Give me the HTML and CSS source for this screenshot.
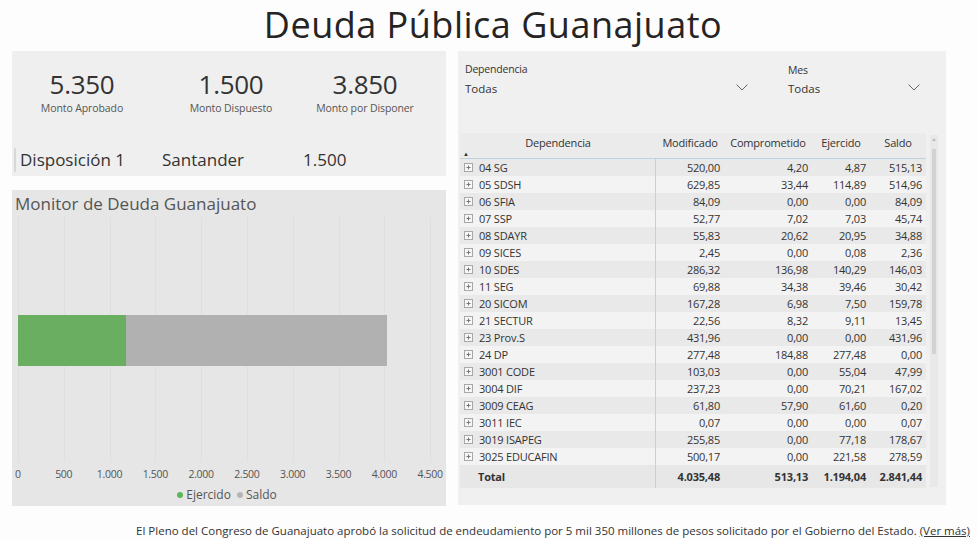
FILE: index.html
```html
<!DOCTYPE html>
<html lang="es">
<head>
<meta charset="utf-8">
<title>Deuda Pública Guanajuato</title>
<link rel="stylesheet" href="styles.css">
</head>
<body>
<div class="page">
  <h1 class="title">Deuda Pública Guanajuato</h1>
  <div class="main">
    <div class="left">
      <section class="kpis">
        <div class="kpi-row">
          <div class="kpi"><div class="kpi-num">5.350</div><div class="kpi-lbl">Monto Aprobado</div></div>
          <div class="kpi"><div class="kpi-num">1.500</div><div class="kpi-lbl">Monto Dispuesto</div></div>
          <div class="kpi"><div class="kpi-num">3.850</div><div class="kpi-lbl">Monto por Disponer</div></div>
        </div>
        <div class="disp-row">
          <span>Disposición 1</span><span>Santander</span><span>1.500</span>
        </div>
      </section>
      <section class="chart">
        <h2 class="chart-title">Monitor de Deuda Guanajuato</h2>
        <div class="plot">
          <div class="bar">
            <div class="seg seg-green" style="width:108px"></div>
            <div class="seg seg-gray" style="width:261px"></div>
          </div>
        </div>
        <div class="axis">
          <span>0</span><span>500</span><span>1.000</span><span>1.500</span><span>2.000</span><span>2.500</span><span>3.000</span><span>3.500</span><span>4.000</span><span>4.500</span>
        </div>
        <div class="legend">
          <span class="lg"><i class="dot dot-green"></i>Ejercido</span>
          <span class="lg"><i class="dot dot-gray"></i>Saldo</span>
        </div>
      </section>
    </div>
    <section class="rpanel">
      <div class="slicers">
        <div class="slicer slicer-dep">
          <div class="sl-lbl">Dependencia</div>
          <div class="sl-val"><span>Todas</span><svg class="chev" width="12" height="7" viewBox="0 0 12 7"><path d="M0.5 0.5 L6 6 L11.5 0.5" fill="none" stroke="#666" stroke-width="1"/></svg></div>
        </div>
        <div class="slicer slicer-mes">
          <div class="sl-lbl">Mes</div>
          <div class="sl-val"><span>Todas</span><svg class="chev" width="12" height="7" viewBox="0 0 12 7"><path d="M0.5 0.5 L6 6 L11.5 0.5" fill="none" stroke="#666" stroke-width="1"/></svg></div>
        </div>
      </div>
      <div class="tablewrap">
        <table class="grid">
          <colgroup><col class="c1"><col class="c2"><col class="c3"><col class="c4"><col class="c5"></colgroup>
          <thead>
            <tr><th class="th-dep">Dependencia<span class="sort">▲</span></th><th>Modificado</th><th>Comprometido</th><th>Ejercido</th><th>Saldo</th></tr>
          </thead>
          <tbody id="rows"></tbody>
          <tfoot>
            <tr><td class="name tot">Total</td><td>4.035,48</td><td>513,13</td><td>1.194,04</td><td>2.841,44</td></tr>
          </tfoot>
        </table>
        <div class="scroll"><div class="sc-up"></div><div class="sc-thumb"></div></div>
      </div>
    </section>
  </div>
  <p class="footer">El Pleno del Congreso de Guanajuato aprobó la solicitud de endeudamiento por 5 mil 350 millones de pesos solicitado por el Gobierno del Estado. <a class="more">(Ver más)</a></p>
</div>
<script src="app.js"></script>
</body>
</html>
```

FILE: app.js
```js
var data = [
["04 SG","520,00","4,20","4,87","515,13"],
["05 SDSH","629,85","33,44","114,89","514,96"],
["06 SFIA","84,09","0,00","0,00","84,09"],
["07 SSP","52,77","7,02","7,03","45,74"],
["08 SDAYR","55,83","20,62","20,95","34,88"],
["09 SICES","2,45","0,00","0,08","2,36"],
["10 SDES","286,32","136,98","140,29","146,03"],
["11 SEG","69,88","34,38","39,46","30,42"],
["20 SICOM","167,28","6,98","7,50","159,78"],
["21 SECTUR","22,56","8,32","9,11","13,45"],
["23 Prov.S","431,96","0,00","0,00","431,96"],
["24 DP","277,48","184,88","277,48","0,00"],
["3001 CODE","103,03","0,00","55,04","47,99"],
["3004 DIF","237,23","0,00","70,21","167,02"],
["3009 CEAG","61,80","57,90","61,60","0,20"],
["3011 IEC","0,07","0,00","0,00","0,07"],
["3019 ISAPEG","255,85","0,00","77,18","178,67"],
["3025 EDUCAFIN","500,17","0,00","221,58","278,59"]
];
var icon = '<svg class="exp" width="9" height="9" viewBox="0 0 9 9"><rect x="0.5" y="0.5" width="8" height="8" fill="#f7f7f7" stroke="#a8a8a8"/><path d="M2.5 4.5 H6.5 M4.5 2.5 V6.5" stroke="#777" stroke-width="1"/></svg>';
var html = '';
data.forEach(function (r) {
  html += '<tr><td class="name">' + icon + '<span>' + r[0] + '</span></td><td>' + r[1] + '</td><td>' + r[2] + '</td><td>' + r[3] + '</td><td>' + r[4] + '</td></tr>';
});
document.getElementById('rows').innerHTML = html;
```

FILE: styles.css
```css
* { box-sizing: border-box; }
html, body { margin: 0; padding: 0; background: #fdfdfd; }
body { font-family: "Open Sans", "Noto Sans", sans-serif; color: #333; width: 977px; height: 539px; overflow: hidden; }

.page { display: flex; flex-direction: column; }

.title {
  margin: 0; height: 51px; line-height: 49px;
  font-size: 36px; font-weight: 400; color: #252423;
  text-align: center; padding-left: 9px; letter-spacing: 0.5px;
}

.main { display: flex; gap: 12px; padding-left: 12px; }

.left { width: 434px; display: flex; flex-direction: column; gap: 14px; }

.kpis { background: #efefef; height: 125px; padding-top: 18px; }
.kpi-row { display: grid; grid-template-columns: 140px 158px 110px; }
.kpi { text-align: center; }
.kpi-num { font-size: 26px; line-height: 30px; color: #333; letter-spacing: -0.3px; }
.kpi-lbl { font-size: 10.5px; line-height: 14px; color: #555; margin-top: 2px; letter-spacing: -0.1px; white-space: nowrap; }

.disp-row {
  margin-top: 33px; margin-left: 2px; height: 24px;
  border-left: 2px solid #d8d8d8; padding-left: 4px;
  display: grid; grid-template-columns: 142px 141px auto;
  font-size: 17px; line-height: 24px; color: #333;
}

.chart { background: #e6e6e6; height: 316px; display: flex; flex-direction: column; padding-left: 6px; }
.chart-title { margin: 0; font-size: 17px; font-weight: 400; color: #555; line-height: 22px; padding-top: 3px; margin-left: -3px; }
.plot {
  margin-top: 2px; height: 245px; width: 414px;
  background: repeating-linear-gradient(to right, #dfdfdf 0 1px, transparent 1px 45.8px);
  display: flex; align-items: center;
}
.bar { display: flex; height: 51px; margin-top: 2px; }
.seg-green { background: #6aae62; }
.seg-gray { background: #b1b1b1; }

.axis { display: flex; margin-left: -23px; margin-top: 4px; height: 16px; }
.axis span { width: 45.8px; flex: none; text-align: center; font-size: 10.5px; line-height: 16px; color: #555; letter-spacing: -0.3px; }

.legend { display: flex; justify-content: center; gap: 6px; font-size: 12px; line-height: 18px; color: #555; margin-top: 4px; padding-right: 10px; }
.lg { display: flex; align-items: center; }
.dot { width: 6px; height: 6px; border-radius: 50%; display: inline-block; margin-right: 3px; }
.dot-green { background: #5cb55a; }
.dot-gray { background: #b5b5b5; }

.rpanel { width: 488px; height: 454px; background: #f0f0f0; display: flex; flex-direction: column; }

.slicers { display: flex; padding: 11px 0 0 7px; height: 82px; }
.slicer { display: flex; flex-direction: column; }
.slicer-dep { width: 287px; }
.slicer-mes { width: 136px; margin-left: 36px; }
.sl-lbl { font-size: 10.5px; line-height: 14px; color: #333; letter-spacing: -0.2px; }
.slicer-mes .sl-lbl { margin-top: 1px; margin-bottom: -1px; }
.sl-val { display: flex; justify-content: space-between; align-items: center; font-size: 11.5px; line-height: 16px; margin-top: 5px; color: #333; }
.chev { margin-top: -4px; margin-right: 4px; }

.tablewrap { display: flex; padding-left: 2px; }
.grid { border-collapse: collapse; table-layout: fixed; width: 466px; font-size: 11px; color: #333; }
.grid col.c1 { width: 196px; }
.grid col.c2 { width: 68px; }
.grid col.c3 { width: 88px; }
.grid col.c4 { width: 58px; }
.grid col.c5 { width: 56px; }
.grid th {
  font-weight: 400; height: 25px; padding: 0; vertical-align: top; line-height: 20px;
  text-align: center; background: #ebebeb; border-bottom: 1px solid #bcd3e4; color: #333; letter-spacing: -0.2px;
}
.th-dep { position: relative; }
.sort { position: absolute; left: 3px; bottom: 0; font-size: 6px; line-height: 8px; color: #333; }
.grid td { height: 17px; padding: 0 4px 0 0; text-align: right; line-height: 17px; white-space: nowrap; letter-spacing: -0.2px; }
.grid td.name { text-align: left; padding-left: 4px; border-right: 1px solid #bcd3e4; display: flex; align-items: center; gap: 6px; height: 17px; }
.grid tbody tr:nth-child(odd) td { background: #e9e9e9; }
.grid tbody tr:nth-child(even) td { background: #f3f3f3; }
.grid tfoot td { height: 23px; line-height: 23px; font-weight: 700; background: #e7e7e7; }
.grid tfoot td.name { padding-left: 18px; height: 23px; }
.exp { flex: none; }

.scroll { width: 8px; margin-left: 4px; margin-top: 2px; height: 352px; background: #e9e9e9; display: flex; flex-direction: column; align-items: center; }
.sc-up { width: 0; height: 0; border-left: 2px solid transparent; border-right: 2px solid transparent; border-bottom: 3px solid #bbb; margin-top: 3px; }
.sc-thumb { width: 4px; height: 205px; background: #d2d2d2; margin-top: 8px; }

.footer { margin: 17px 0 0; font-size: 11.5px; line-height: 16px; color: #333; text-align: right; padding-right: 7px; letter-spacing: 0; white-space: nowrap; }
.more { text-decoration: underline; }
```
